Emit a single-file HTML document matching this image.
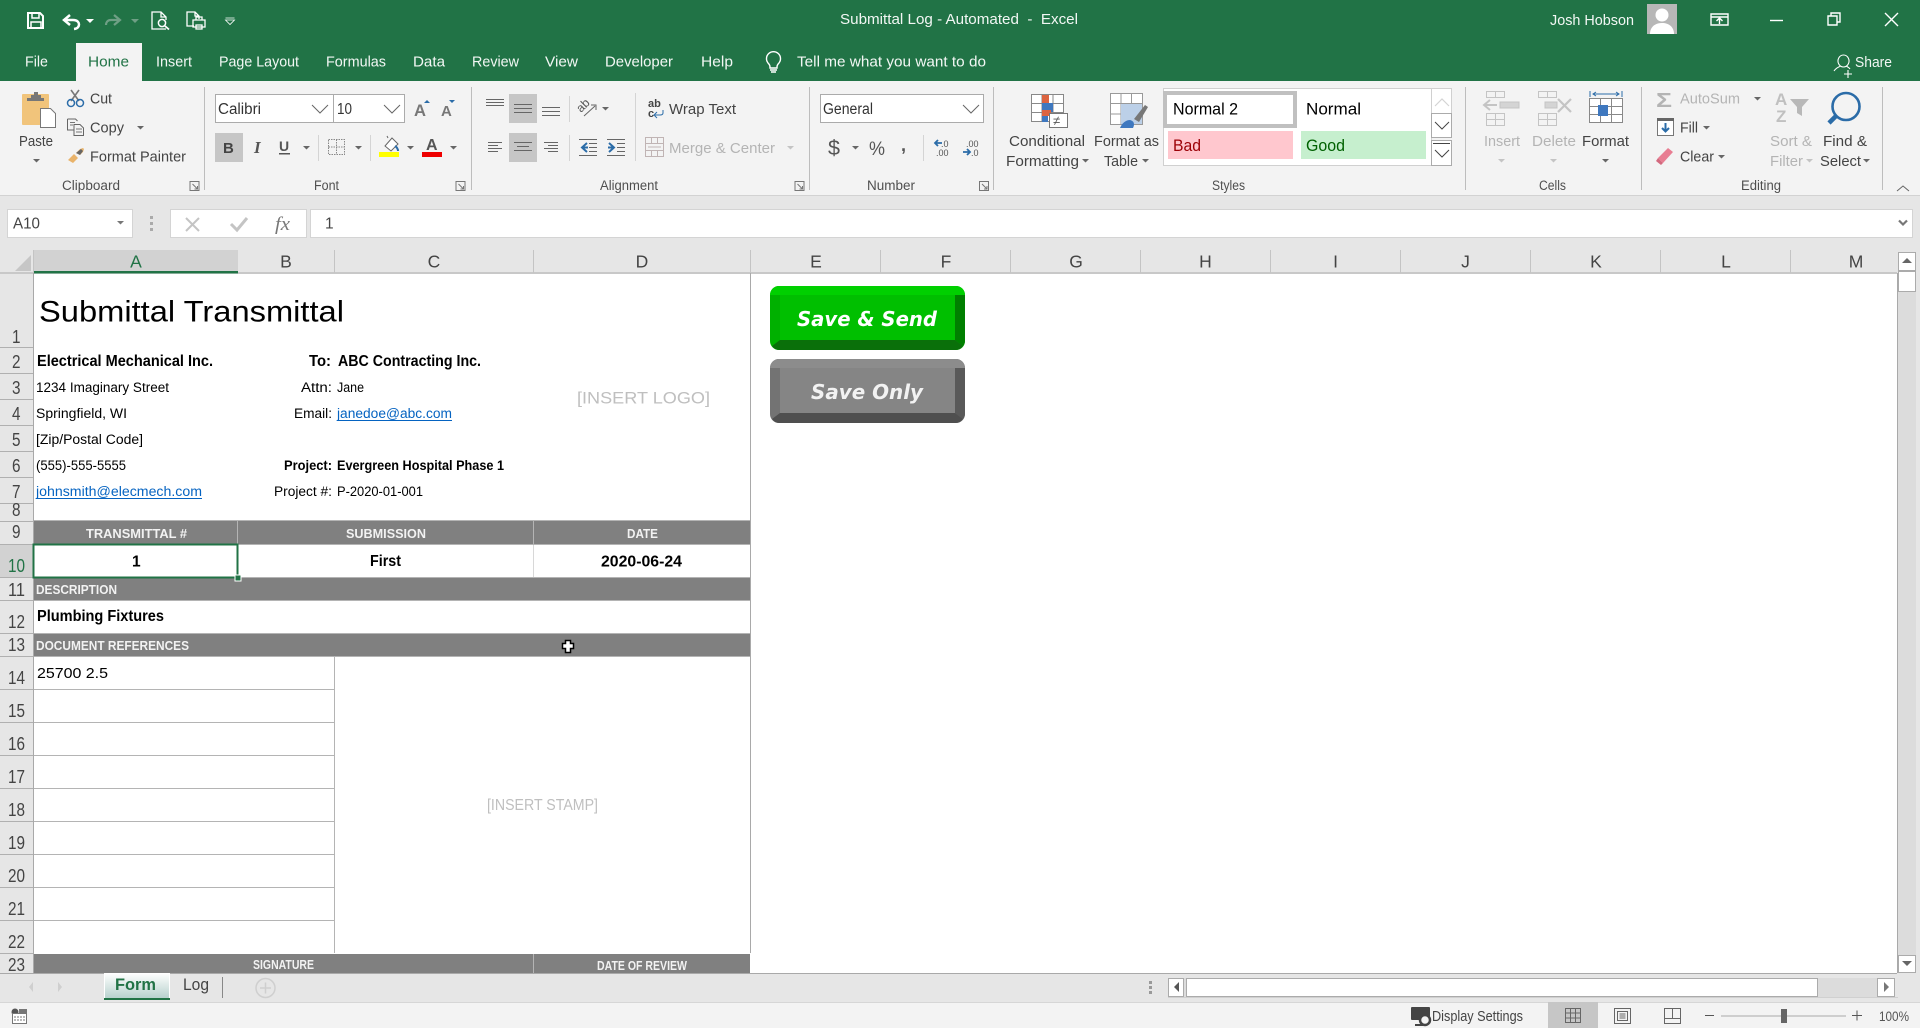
<!DOCTYPE html>
<html><head><meta charset="utf-8"><title>Submittal Log - Automated - Excel</title>
<style>
html,body{margin:0;padding:0;width:1920px;height:1028px;overflow:hidden;background:#e6e6e6}
svg{display:block;font-family:"Liberation Sans",sans-serif}
.tb{fill:#f2f7f4;font-size:14.5px}
.r{fill:#444;font-size:14.5px}
.g{fill:#b4b4b4;font-size:14.5px}
.l{fill:#4f4f4f;font-size:13.5px}
.h{fill:#444;font-size:17.5px;text-anchor:middle}
.n{fill:#444;font-size:18px}
.s{fill:#000;font-size:13.5px}
.b{fill:#000;font-size:15.5px;font-weight:bold}
.w{fill:#f2f2f2;font-size:13px;font-weight:bold}
.lnk{fill:#0563c1;font-size:13.5px}
.pl{fill:#bfbfbf;font-size:17px}
.btn{fill:#fff;font-family:"DejaVu Sans",sans-serif;font-size:20px;font-weight:bold;font-style:italic}
.a{fill:#666}
.ln{stroke:#666;stroke-width:1;fill:none}
.wh{stroke:#fff;fill:none}
</style></head><body>
<svg width="1920" height="1028" viewBox="0 0 1920 1028" xmlns="http://www.w3.org/2000/svg">
<!-- title bar -->
<rect width="1920" height="81" fill="#217346"/>
<g class="wh" stroke-width="2">
<path d="M28 13h12l3 3v12h-15z"/><path d="M32 13v5h7v-5" stroke-width="1.5"/><path d="M31 28v-6h10v6" stroke-width="1.5"/>
<path d="M70 15l-6 5 6 5" stroke-width="2.5"/><path d="M65 20h8c5 0 6 3 6 4.5s-1 4-5 4.5" stroke-width="2.5"/>
<path d="M114 15l6 5-6 5M119 20h-8c-4 0-5 3-5 5" stroke="#6f9f85" stroke-width="2.2"/>
<path d="M166 29h-14V12h9l5 5v3M161 12v5h5" stroke-width="1.3"/><circle cx="162" cy="23" r="3.6" stroke-width="1.5"/><path d="M165 26l4 3.500" stroke-width="1.8"/>
<path d="M194 26h-7V12h8l4 4v3M195 12v4h4" stroke-width="1.3"/><path d="M193 20h12v7h-12zM196 20v-3h6v3M196 25h6v4h-6z" stroke-width="1.3"/>
<path d="M225.500 20h9l-4.500 4.500zM225.500 18h9" stroke-width=".8"/>
</g>
<path d="M86 19h8l-4 4z" fill="#fff"/><path d="M131 19h8l-4 4z" fill="#6f9f85"/>
<text class="tb" x="840" y="24" textLength="238" lengthAdjust="spacingAndGlyphs" xml:space="preserve">Submittal Log - Automated  -  Excel</text>
<text class="tb" x="1550" y="25" textLength="84" lengthAdjust="spacingAndGlyphs">Josh Hobson</text>
<rect x="1647" y="4" width="30" height="30" fill="#b7b7b7"/>
<circle cx="1662" cy="15" r="6.500" fill="#fff"/><path d="M1650 34c0-7 5-11 12-11s12 4 12 11z" fill="#fff"/>
<g class="wh" stroke-width="1.4">
<path d="M1711 14h17v11h-17zM1711 17h17M1719.500 24v-5M1716.500 21l3-3 3 3"/>
<path d="M1770 20.500h13"/>
<path d="M1828 16h9v9h-9zM1831 16v-3h9v9h-3"/>
<path d="M1885 13l13 13M1898 13l-13 13"/>
<path d="M1834 71c2-3 4-4 7-5M1846 66c2 1 3 1.500 4 3M1843.500 55a5.500 6 0 1 0 .010 0zM1848 70v8M1844 74h8" stroke-width="1.1"/>
</g>
<rect x="76" y="43" width="66" height="38" fill="#f3f3f3"/>
<g class="tb">
<text x="25" y="66.500" textLength="23" lengthAdjust="spacingAndGlyphs">File</text>
<text x="156" y="66.500" textLength="36" lengthAdjust="spacingAndGlyphs">Insert</text>
<text x="219" y="66.500" textLength="80" lengthAdjust="spacingAndGlyphs">Page Layout</text>
<text x="326" y="66.500" textLength="60" lengthAdjust="spacingAndGlyphs">Formulas</text>
<text x="413" y="66.500" textLength="32" lengthAdjust="spacingAndGlyphs">Data</text>
<text x="472" y="66.500" textLength="47" lengthAdjust="spacingAndGlyphs">Review</text>
<text x="545" y="66.500" textLength="33" lengthAdjust="spacingAndGlyphs">View</text>
<text x="605" y="66.500" textLength="68" lengthAdjust="spacingAndGlyphs">Developer</text>
<text x="701" y="66.500" textLength="32" lengthAdjust="spacingAndGlyphs">Help</text>
<text x="797" y="66.500" textLength="189" lengthAdjust="spacingAndGlyphs">Tell me what you want to do</text>
<text x="1855" y="67" textLength="37" lengthAdjust="spacingAndGlyphs">Share</text>
</g>
<text x="88" y="66.500" font-size="14.500" fill="#217346" textLength="41" lengthAdjust="spacingAndGlyphs">Home</text>
<g class="wh" stroke-width="1.4"><path d="M768 63a7 7 0 1 1 11 0c-2 2-2 3-2 5h-7c0-2 0-3-2-5zM770 70h7M771 72h5"/></g>

<!-- ribbon -->
<rect y="81" width="1920" height="114" fill="#f3f3f3"/>
<rect y="195" width="1920" height="55" fill="#e6e6e6"/>
<rect y="195" width="1920" height="1" fill="#d2d2d2"/>
<g stroke="#bdbdbd" stroke-width="1">
<path d="M204.500 87v103M471.500 87v103M809.500 87v103M993.500 87v103M1465.500 87v103M1641.500 87v103M1882.500 87v103"/>
<path d="M318.500 135v26M370.500 135v26M569.500 96v26M569.500 135v26M635.500 93v68M923.500 135v26" stroke="#d4d4d4"/>
</g>
<!-- clipboard -->
<rect x="22" y="94" width="27" height="31" rx="1" fill="#f1c47b"/>
<path d="M27 98h4v-3h3v-3h4v3h3v3h3v3h-17z" fill="#777"/>
<path d="M40.500 108.500h10l5 5v14h-15z" fill="#fff" stroke="#777"/>
<text class="r" x="19" y="146" textLength="34" lengthAdjust="spacingAndGlyphs">Paste</text>
<path class="a" d="M33 159h7l-3.500 3.500z"/>
<text class="r" x="90" y="103.500" textLength="22" lengthAdjust="spacingAndGlyphs">Cut</text>
<g fill="none"><path d="M71 90l8 11M79 90l-8 11" stroke="#777" stroke-width="1.6"/><circle cx="71" cy="103" r="3.500" stroke="#2b6ca8" stroke-width="1.5"/><circle cx="80" cy="103" r="3.500" stroke="#2b6ca8" stroke-width="1.5"/></g>
<text class="r" x="90" y="132.500" textLength="34" lengthAdjust="spacingAndGlyphs">Copy</text>
<path d="M67.500 119h8l2 2M67.500 119v11h6M74 124.500h6l3.500 3.500v7.500h-9.500z" fill="none" stroke="#666"/><path d="M70 122.500h5M70 125h3M76 129h6M76 132h6" stroke="#777"/>
<path class="a" d="M137 126h7l-3.500 3.500z"/>
<text class="r" x="90" y="161.500" textLength="96" lengthAdjust="spacingAndGlyphs">Format Painter</text>
<path d="M74 154l4 4-5 5-5-3zM76 153l4-4 3-1 1 1-1 3-3 3z" fill="#e9b36a"/><path d="M76 153l5-4 2 2-3 4z" fill="#666"/>
<text class="l" x="62" y="190" textLength="58" lengthAdjust="spacingAndGlyphs">Clipboard</text>
<g class="launcher" fill="none" stroke="#777"><path d="M190 181.500h9v9h-9zM192.500 184l5 5M197.500 186v3h-3"/><path d="M456 181.500h9v9h-9zM458.500 184l5 5M463.500 186v3h-3"/><path d="M795 181.500h9v9h-9zM797.500 184l5 5M802.500 186v3h-3"/><path d="M979.500 181.500h9v9h-9zM982 184l5 5M987 186v3h-3"/></g>

<!-- font -->
<rect x="215.500" y="94.500" width="118" height="28" fill="#fff" stroke="#ababab"/>
<rect x="333.500" y="94.500" width="71" height="28" fill="#fff" stroke="#ababab"/>
<text x="218" y="114" font-size="15.500" fill="#333" textLength="43" lengthAdjust="spacingAndGlyphs">Calibri</text>
<text x="337" y="114" font-size="15.500" fill="#333" textLength="15" lengthAdjust="spacingAndGlyphs">10</text>
<path class="ln" stroke="#444" d="M312 105l8 8 8-8M384 105l8 8 8-8"/>
<text x="414" y="116" font-size="17" fill="#777" font-weight="bold" textLength="12" lengthAdjust="spacingAndGlyphs">A</text><path d="M424 103h6l-3-3z" fill="#2b6ca8"/>
<text x="441" y="116" font-size="15" fill="#777" font-weight="bold">A</text><path d="M449 100h6l-3 3z" fill="#2b6ca8"/>
<rect x="215" y="133" width="28" height="29" fill="#c6c6c6"/>
<text x="223" y="153" font-size="15" font-weight="bold" fill="#444">B</text>
<text x="254" y="153" font-size="17" font-style="italic" font-weight="bold" fill="#555" font-family="Liberation Serif">I</text>
<text x="279" y="151" font-size="14" font-weight="bold" fill="#555">U</text><rect x="279" y="153" width="11" height="1.500" fill="#555"/>
<path class="a" d="M303 146h7l-3.500 3.500zM355 146h7l-3.500 3.500zM407 146h7l-3.500 3.500zM450 146h7l-3.500 3.500z"/>
<path d="M328.500 139.500h16v15h-16zM336.500 139.500v15M328.500 147h16" fill="none" stroke="#888" stroke-dasharray="1.500 1"/>
<path d="M385 146l7-8 6 6-7 7zM388 138l-1-2" fill="#fff" stroke="#666"/><path d="M395 146q3 2 3 5" stroke="#2b6ca8" stroke-width="2" fill="none"/>
<rect x="379" y="152" width="20" height="5" fill="#ffff00"/>
<text x="426" y="150" font-size="16" font-weight="bold" fill="#555">A</text>
<rect x="422" y="152" width="20" height="5" fill="#ee0000"/>
<text class="l" x="314" y="190" textLength="25" lengthAdjust="spacingAndGlyphs">Font</text>

<!-- alignment -->
<rect x="509" y="94" width="28" height="29" fill="#c6c6c6"/><rect x="509" y="133" width="28" height="29" fill="#c6c6c6"/>
<g stroke="#666" stroke-width="1">
<path d="M486 99.500h18M486 102.500h18M486 105.500h18"/>
<path d="M514 104.500h18M514 108.500h18M514 112.500h18"/>
<path d="M542 107.500h18M542 111.500h18M542 115.500h18"/>
<path d="M488 142.500h14M488 145.500h10M488 148.500h14M488 151.500h10"/>
<path d="M514 142.500h18M517 146.500h12M514 150.500h18"/>
<path d="M544 142.500h14M548 145.500h10M544 148.500h14M548 151.500h10"/>
<path d="M579 139.500h18M589 143.500h8M589 147.500h8M589 151.500h8M579 155.500h18"/>
<path d="M607 139.500h18M617 143.500h8M617 147.500h8M617 151.500h8M607 155.500h18"/>
</g>
<path d="M588 147.500h-5M587 143l-5 4.500 5 4.500" stroke="#2b6ca8" stroke-width="2" fill="none"/>
<path d="M608 147.500h5M609 143l5 4.500-5 4.500" stroke="#2b6ca8" stroke-width="2" fill="none"/>
<text x="579" y="108" font-size="12" fill="#555" transform="rotate(-45 586 108)">ab</text>
<path d="M584 116l11-10M591 105l5 0 0 5" stroke="#666" fill="none"/>
<path class="a" d="M602 107h7l-3.500 3.500z"/>
<text x="648" y="107" font-size="11" fill="#444" font-weight="bold">ab</text><text x="648" y="117" font-size="11" fill="#444" font-weight="bold">c</text>
<path d="M663 110v3c0 2-2 2-3 2h-5M657 112l-3 3 3 3" stroke="#2b6ca8" fill="none"/>
<text class="r" x="669" y="114" textLength="67" lengthAdjust="spacingAndGlyphs">Wrap Text</text>
<path d="M645.500 137.500h18v19h-18zM645.500 143.500h18M645.500 150.500h18M651.500 137.500v6M657.500 137.500v6M651.500 150.500v6M657.500 150.500v6M648 147h13" fill="none" stroke="#c0b4b4"/>
<text class="g" x="669" y="153" textLength="106" lengthAdjust="spacingAndGlyphs">Merge &amp; Center</text>
<path d="M787 146h7l-3.500 3.500z" fill="#c4c4c4"/>
<text class="l" x="600" y="190" textLength="58" lengthAdjust="spacingAndGlyphs">Alignment</text>

<!-- number -->
<rect x="820.500" y="94.500" width="163" height="28" fill="#fff" stroke="#ababab"/>
<text x="823" y="114" font-size="15.500" fill="#333" textLength="50" lengthAdjust="spacingAndGlyphs">General</text>
<path class="ln" stroke="#444" d="M963 105l8 8 8-8"/>
<text x="828" y="155" font-size="21" fill="#555" textLength="12" lengthAdjust="spacingAndGlyphs">$</text>
<path class="a" d="M852 146h7l-3.500 3.500z"/>
<text x="869" y="155" font-size="19" fill="#555" textLength="16" lengthAdjust="spacingAndGlyphs">%</text>
<text x="901" y="151" font-size="18" font-weight="bold" fill="#555">,</text>
<text x="941" y="147" font-size="9" fill="#555">.0</text><text x="936" y="156" font-size="9" fill="#555">.00</text>
<path d="M935 143h7M938 140l-3 3 3 3" stroke="#2b6ca8" stroke-width="1.800" fill="none"/>
<text x="966" y="147" font-size="9" fill="#555">.00</text><text x="971" y="156" font-size="9" fill="#555">.0</text>
<path d="M963 152h7M967 149l3 3-3 3" stroke="#2b6ca8" stroke-width="1.800" fill="none"/>
<text class="l" x="867" y="190" textLength="48" lengthAdjust="spacingAndGlyphs">Number</text>

<!-- styles -->
<path d="M1031.500 94.500h32v27h-32zM1042 94.500v27M1053 94.500v27M1031.500 103.500h32M1031.500 112.500h32" fill="#fff" stroke="#888"/>
<rect x="1042" y="95" width="7" height="8" fill="#dc6440"/><rect x="1042" y="103" width="11" height="9" fill="#3f78bf"/><rect x="1042" y="110" width="9" height="6" fill="#dc6440"/><rect x="1042" y="116" width="6" height="6" fill="#3f78bf"/>
<rect x="1049.500" y="113.500" width="18" height="14" fill="#fff" stroke="#777"/><text x="1053" y="125" font-size="13" fill="#555">≠</text>
<path d="M1110.500 93.500h32v31h-32zM1121 93.500v31M1131.500 93.500v31M1110.500 103.500h32M1110.500 114h32" fill="#fff" stroke="#999"/>
<rect x="1121" y="104" width="21" height="20" fill="#bcd0e8"/>
<path d="M1134 119l11-14 3 2-9 15z" fill="#777"/><path d="M1120 128c2-5 6-8 10-8 4 1 5 4 3 8z" fill="#3f78bf"/>
<g class="r">
<text x="1009" y="146" textLength="76" lengthAdjust="spacingAndGlyphs">Conditional</text>
<text x="1006" y="166" textLength="73" lengthAdjust="spacingAndGlyphs">Formatting</text>
<text x="1094" y="146" textLength="65" lengthAdjust="spacingAndGlyphs">Format as</text>
<text x="1104" y="166" textLength="34" lengthAdjust="spacingAndGlyphs">Table</text>
</g>
<path class="a" d="M1082 159h7l-3.500 3.500zM1142 159h7l-3.500 3.500z"/>
<rect x="1163.500" y="88.500" width="268" height="77" fill="#fff" stroke="#d0d0d0"/>
<rect x="1165" y="93" width="130" height="33" fill="#fff" stroke="#c0c0c0" stroke-width="4"/>
<rect x="1168" y="131" width="125" height="28" fill="#ffc7ce"/><rect x="1301" y="131" width="125" height="28" fill="#c6efce"/>
<text x="1173" y="114.500" font-size="17" fill="#000" textLength="65" lengthAdjust="spacingAndGlyphs">Normal 2</text>
<text x="1306" y="114.500" font-size="17" fill="#000" textLength="55" lengthAdjust="spacingAndGlyphs">Normal</text>
<text x="1173" y="151" font-size="17" fill="#9c0006" textLength="28" lengthAdjust="spacingAndGlyphs">Bad</text>
<text x="1306" y="151" font-size="17" fill="#006100" textLength="39" lengthAdjust="spacingAndGlyphs">Good</text>
<g fill="#fff" stroke="#ababab"><rect x="1431.500" y="88.500" width="20" height="25" stroke="#d0d0d0"/><rect x="1431.500" y="113.500" width="20" height="24"/><rect x="1431.500" y="140.500" width="20" height="25"/></g>
<path d="M1435 106l7-7 7 7" fill="none" stroke="#d4d4d4" stroke-width="1.200"/>
<path d="M1435 122l7 7 7-7M1435 150l7 7 7-7M1433 143.500h17" fill="none" stroke="#444"/>
<text class="l" x="1212" y="190" textLength="33" lengthAdjust="spacingAndGlyphs">Styles</text>

<!-- cells -->
<path d="M1486.500 91.500h18v6h-18zM1495.500 91.500v6M1486.500 113.500h18v12h-18zM1495.500 113.500v12M1486.500 119.500h18" fill="none" stroke="#c4c4c4"/>
<rect x="1500" y="102" width="19" height="6" fill="#d4d4d4" stroke="#c4c4c4"/><path d="M1497 105h-12M1490 100l-6 5 6 5" stroke="#c4c4c4" stroke-width="2" fill="none"/>
<path d="M1538.500 91.500h18v6h-18zM1547.500 91.500v6M1538.500 113.500h18v12h-18zM1547.500 113.500v12M1538.500 119.500h18" fill="none" stroke="#c4c4c4"/>
<rect x="1545" y="102" width="12" height="6" fill="#d4d4d4" stroke="#c4c4c4"/><path d="M1558 99l13 13M1571 99l-13 13" stroke="#c4c4c4" stroke-width="2.200"/>
<path d="M1589.500 98.500h33v24h-33zM1600.500 98.500v24M1611.500 98.500v24M1589.500 106.500h33M1589.500 114.500h33" fill="#fff" stroke="#888"/>
<rect x="1598" y="105" width="10" height="11" fill="#3f78bf"/>
<path d="M1590 91v6M1622 91v6M1593 94h26M1596 92l-3 2 3 2M1616 92l3 2-3 2" stroke="#2b6ca8" fill="none"/>
<text class="g" x="1484" y="146" textLength="36" lengthAdjust="spacingAndGlyphs">Insert</text>
<text class="g" x="1532" y="146" textLength="44" lengthAdjust="spacingAndGlyphs">Delete</text>
<text class="r" x="1582" y="146" textLength="47" lengthAdjust="spacingAndGlyphs" fill="#333">Format</text>
<path d="M1498 159h7l-3.500 3.500zM1550 159h7l-3.500 3.500z" fill="#c4c4c4"/><path class="a" d="M1602 159h7l-3.500 3.500z"/>
<text class="l" x="1539" y="190" textLength="27" lengthAdjust="spacingAndGlyphs">Cells</text>

<!-- editing -->
<text x="1656" y="107" font-size="20" font-weight="bold" fill="#b4b4b4" textLength="16" lengthAdjust="spacingAndGlyphs">Σ</text>
<text class="g" x="1680" y="103.500" textLength="60" lengthAdjust="spacingAndGlyphs">AutoSum</text>
<path class="a" d="M1754 97h7l-3.500 3.500zM1703 126h7l-3.500 3.500zM1718 155h7l-3.500 3.500z"/>
<rect x="1657.500" y="118.500" width="16" height="17" fill="#fff" stroke="#777"/><rect x="1657" y="118" width="17" height="3" fill="#666"/>
<path d="M1665.500 123v8M1662 128l3.500 3.500 3.500-3.500" stroke="#2b6ca8" stroke-width="2" fill="none"/>
<text class="r" x="1680" y="132.500" textLength="18" lengthAdjust="spacingAndGlyphs">Fill</text>
<path d="M1658 158l10-10 5 4-10 11z" fill="#e87d92"/><path d="M1658 158l5 5-2 2-5-4z" fill="#d3697e"/>
<text class="r" x="1680" y="161.500" textLength="34" lengthAdjust="spacingAndGlyphs">Clear</text>
<text x="1775" y="105" font-size="17" font-weight="bold" fill="#c0c0c0">A</text><text x="1776" y="122" font-size="17" font-weight="bold" fill="#c0c0c0">Z</text>
<path d="M1790 99h19l-7 8v9l-5-3v-6z" fill="#b8b8b8"/>
<text class="g" x="1770" y="146" textLength="42" lengthAdjust="spacingAndGlyphs">Sort &amp;</text>
<text class="g" x="1770" y="166" textLength="33" lengthAdjust="spacingAndGlyphs">Filter</text>
<path d="M1806 159h7l-3.500 3.500z" fill="#c4c4c4"/>
<circle cx="1846" cy="106.500" r="13.500" fill="none" stroke="#2b6ca8" stroke-width="2.600"/><path d="M1836 116l-7 7" stroke="#2b6ca8" stroke-width="4.500"/>
<text class="r" x="1823" y="146" textLength="44" lengthAdjust="spacingAndGlyphs" fill="#333">Find &amp;</text>
<text class="r" x="1820" y="166" textLength="41" lengthAdjust="spacingAndGlyphs" fill="#333">Select</text>
<path class="a" d="M1863 159h7l-3.500 3.500z"/>
<text class="l" x="1741" y="190" textLength="40" lengthAdjust="spacingAndGlyphs">Editing</text>
<path d="M1897 191l6-5 6 5" fill="none" stroke="#666"/>

<!-- formula bar -->
<rect x="7.500" y="209.500" width="125" height="28" fill="#fff" stroke="#d4d4d4"/>
<text x="13" y="228.500" font-size="15.500" fill="#444" textLength="27" lengthAdjust="spacingAndGlyphs">A10</text>
<path d="M117 221h7l-3.500 3.500z" fill="#777"/>
<path d="M151.500 216v3M151.500 222v3M151.500 228v3" stroke="#aaa" stroke-width="3"/>
<rect x="170.500" y="209.500" width="136" height="28" fill="#fff" stroke="#d4d4d4"/>
<rect x="310.500" y="209.500" width="1602" height="28" fill="#fff" stroke="#d4d4d4"/>
<path d="M186 218l13 13M199 218l-13 13" stroke="#c4c4c4" stroke-width="2"/>
<path d="M231 224l6 6 10-12" fill="none" stroke="#c4c4c4" stroke-width="3"/>
<text x="275" y="230" font-size="19" font-style="italic" font-family="Liberation Serif" fill="#777" textLength="15" lengthAdjust="spacingAndGlyphs">fx</text>
<text x="325" y="228.500" font-size="15.500" fill="#444">1</text>
<path d="M1899 220.500l4 4 4-4" fill="none" stroke="#777" stroke-width="2.200"/>

<!-- column headers -->
<path d="M31 255v16h-16z" fill="#c6c6c6"/>
<rect x="34" y="250" width="204" height="23" fill="#d2d2d2"/>
<rect y="272.500" width="1897" height="1" fill="#a9a9a9"/>
<rect x="34" y="271" width="204" height="2.500" fill="#217346"/>
<path d="M33.500 250v23M334.500 250v23M533.500 250v23M750.500 250v23M880.500 250v23M1010.500 250v23M1140.500 250v23M1270.500 250v23M1400.500 250v23M1530.500 250v23M1660.500 250v23M1790.500 250v23" stroke="#c4c4c4"/>
<text class="h" x="136" y="267.500" style="fill:#217346">A</text>
<text class="h" x="286" y="267.500">B</text><text class="h" x="434" y="267.500">C</text><text class="h" x="642" y="267.500">D</text><text class="h" x="816" y="267.500">E</text><text class="h" x="946" y="267.500">F</text><text class="h" x="1076" y="267.500">G</text><text class="h" x="1205.500" y="267.500">H</text><text class="h" x="1335.500" y="267.500">I</text><text class="h" x="1465.500" y="267.500">J</text><text class="h" x="1596" y="267.500">K</text><text class="h" x="1726" y="267.500">L</text><text class="h" x="1856" y="267.500">M</text>

<!-- sheet -->
<rect x="34" y="274" width="1863" height="699" fill="#fff"/>
<rect x="0" y="544" width="33" height="34" fill="#d2d2d2"/>
<rect x="33" y="273" width="1" height="700" fill="#a9a9a9"/>
<rect x="750" y="273" width="1" height="680" fill="#a9a9a9"/>
<path d="M0 347.500h33M0 373.500h33M0 399.500h33M0 425.500h33M0 451.500h33M0 477.500h33M0 503.500h33M0 521.500h33M0 544.500h33M0 577.500h33M0 600.500h33M0 633.500h33M0 656.500h33M0 689.500h33M0 722.500h33M0 755.500h33M0 788.500h33M0 821.500h33M0 854.500h33M0 887.500h33M0 920.500h33M0 953.500h33" stroke="#b0b0b0"/>
<g class="n">
<text x="12" y="343" textLength="8.500" lengthAdjust="spacingAndGlyphs">1</text><text x="12" y="368" textLength="8.500" lengthAdjust="spacingAndGlyphs">2</text><text x="12" y="394" textLength="8.500" lengthAdjust="spacingAndGlyphs">3</text><text x="12" y="420" textLength="8.500" lengthAdjust="spacingAndGlyphs">4</text><text x="12" y="446" textLength="8.500" lengthAdjust="spacingAndGlyphs">5</text><text x="12" y="472" textLength="8.500" lengthAdjust="spacingAndGlyphs">6</text><text x="12" y="498" textLength="8.500" lengthAdjust="spacingAndGlyphs">7</text><text x="12" y="516" textLength="8.500" lengthAdjust="spacingAndGlyphs">8</text><text x="12" y="538" textLength="8.500" lengthAdjust="spacingAndGlyphs">9</text>
<text x="8" y="572" textLength="17" lengthAdjust="spacingAndGlyphs" style="fill:#217346">10</text>
<text x="8" y="596" textLength="17" lengthAdjust="spacingAndGlyphs">11</text><text x="8" y="628" textLength="17" lengthAdjust="spacingAndGlyphs">12</text><text x="8" y="651" textLength="17" lengthAdjust="spacingAndGlyphs">13</text><text x="8" y="684" textLength="17" lengthAdjust="spacingAndGlyphs">14</text><text x="8" y="717" textLength="17" lengthAdjust="spacingAndGlyphs">15</text><text x="8" y="750" textLength="17" lengthAdjust="spacingAndGlyphs">16</text><text x="8" y="783" textLength="17" lengthAdjust="spacingAndGlyphs">17</text><text x="8" y="816" textLength="17" lengthAdjust="spacingAndGlyphs">18</text><text x="8" y="849" textLength="17" lengthAdjust="spacingAndGlyphs">19</text><text x="8" y="882" textLength="17" lengthAdjust="spacingAndGlyphs">20</text><text x="8" y="915" textLength="17" lengthAdjust="spacingAndGlyphs">21</text><text x="8" y="948" textLength="17" lengthAdjust="spacingAndGlyphs">22</text><text x="8" y="971" textLength="17" lengthAdjust="spacingAndGlyphs">23</text>
</g>
<text x="39" y="321.500" font-size="29.500" fill="#000" textLength="305" lengthAdjust="spacingAndGlyphs">Submittal Transmittal</text>
<text class="b" x="37" y="366" textLength="176" lengthAdjust="spacingAndGlyphs">Electrical Mechanical Inc.</text>
<text class="b" x="309" y="366" textLength="22" lengthAdjust="spacingAndGlyphs">To:</text>
<text class="b" x="338" y="366" textLength="143" lengthAdjust="spacingAndGlyphs">ABC Contracting Inc.</text>
<text class="s" x="36" y="392" textLength="133" lengthAdjust="spacingAndGlyphs">1234 Imaginary Street</text>
<text class="s" x="301" y="392" textLength="31" lengthAdjust="spacingAndGlyphs">Attn:</text>
<text class="s" x="337" y="392" textLength="27" lengthAdjust="spacingAndGlyphs">Jane</text>
<text class="s" x="36" y="418" textLength="91" lengthAdjust="spacingAndGlyphs">Springfield, WI</text>
<text class="s" x="294" y="418" textLength="38" lengthAdjust="spacingAndGlyphs">Email:</text>
<text class="lnk" x="337" y="418" textLength="115" lengthAdjust="spacingAndGlyphs">janedoe@abc.com</text><rect x="337" y="420" width="115" height="1" fill="#0563c1"/>
<text class="s" x="36" y="444" textLength="107" lengthAdjust="spacingAndGlyphs">[Zip/Postal Code]</text>
<text class="s" x="36" y="470" textLength="90" lengthAdjust="spacingAndGlyphs">(555)-555-5555</text>
<text class="s" x="284" y="470" textLength="48" lengthAdjust="spacingAndGlyphs" font-weight="bold">Project:</text>
<text class="s" x="337" y="470" textLength="167" lengthAdjust="spacingAndGlyphs" font-weight="bold">Evergreen Hospital Phase 1</text>
<text class="lnk" x="36" y="496" textLength="166" lengthAdjust="spacingAndGlyphs">johnsmith@elecmech.com</text><rect x="36" y="498" width="166" height="1" fill="#0563c1"/>
<text class="s" x="274" y="496" textLength="58" lengthAdjust="spacingAndGlyphs">Project #:</text>
<text class="s" x="337" y="496" textLength="86" lengthAdjust="spacingAndGlyphs">P-2020-01-001</text>
<text class="pl" x="577" y="403.500" textLength="133" lengthAdjust="spacingAndGlyphs">[INSERT LOGO]</text>

<!-- bands -->
<g fill="#808080"><rect x="34" y="521" width="716" height="23"/><rect x="34" y="578" width="716" height="22"/><rect x="34" y="634" width="716" height="22"/><rect x="34" y="954" width="716" height="19"/></g>
<path d="M34 520.500h716M34 544.500h716M34 600.500h716M34 633.500h716M34 656.500h716M34 577.500h716" stroke="#b4b4b4"/>
<path d="M237.500 521v23M533.500 521v23M533.500 954v19" stroke="#b4b4b4"/><path d="M533.500 545v32" stroke="#d8d8d8"/>
<g class="w">
<text x="86" y="538" textLength="101" lengthAdjust="spacingAndGlyphs">TRANSMITTAL #</text>
<text x="346" y="538" textLength="80" lengthAdjust="spacingAndGlyphs">SUBMISSION</text>
<text x="627" y="538" textLength="31" lengthAdjust="spacingAndGlyphs">DATE</text>
<text x="36" y="594" textLength="81" lengthAdjust="spacingAndGlyphs">DESCRIPTION</text>
<text x="36" y="650" textLength="153" lengthAdjust="spacingAndGlyphs">DOCUMENT REFERENCES</text>
<text x="253" y="969" textLength="61" lengthAdjust="spacingAndGlyphs">SIGNATURE</text>
<text x="597" y="970" textLength="90" lengthAdjust="spacingAndGlyphs">DATE OF REVIEW</text>
</g>
<text class="b" x="132" y="566.500">1</text>
<text class="b" x="370" y="566" textLength="31" lengthAdjust="spacingAndGlyphs">First</text>
<text class="b" x="601" y="566.500" textLength="81" lengthAdjust="spacingAndGlyphs">2020-06-24</text>
<rect x="33.500" y="544.500" width="204" height="33" fill="none" stroke="#217346" stroke-width="2"/>
<rect x="235" y="575" width="6" height="6" fill="#217346" stroke="#fff"/>
<text class="b" x="37" y="621" textLength="127" lengthAdjust="spacingAndGlyphs">Plumbing Fixtures</text>
<text x="37" y="678" font-size="15" fill="#000" textLength="71" lengthAdjust="spacingAndGlyphs">25700 2.5</text>
<path d="M34 689.500h300M34 722.500h300M34 755.500h300M34 788.500h300M34 821.500h300M34 854.500h300M34 887.500h300M34 920.500h300M334.500 657v296" stroke="#b4b4b4"/>
<text class="pl" x="487" y="810" textLength="111" lengthAdjust="spacingAndGlyphs" style="font-size:15.500px">[INSERT STAMP]</text>
<path d="M565.500 640.500h5v3h3v5h-3v4h-5v-4h-3v-5h3z" fill="#fff" stroke="#000" stroke-width="1.500"/>

<!-- buttons -->
<rect x="770" y="286" width="195" height="64" rx="9" fill="#00b000"/>
<path d="M770 295a9 9 0 0 1 9-9h177a9 9 0 0 1 9 9l-10 0h-175z" fill="#00d000"/>
<path d="M955 295h10v46a9 9 0 0 1-2 5l-8-6z" fill="#007f00"/>
<path d="M780 340h175l8 6a9 9 0 0 1-7 4h-177a9 9 0 0 1-7-4z" fill="#0a700a"/>
<rect x="780" y="295" width="175" height="45" fill="#00bf00"/>
<text class="btn" x="797" y="326" textLength="140" lengthAdjust="spacingAndGlyphs">Save &amp; Send</text>
<rect x="770" y="359" width="195" height="64" rx="9" fill="#737373"/>
<path d="M770 368a9 9 0 0 1 9-9h177a9 9 0 0 1 9 9l-10 0h-175z" fill="#8c8c8c"/>
<path d="M955 368h10v46a9 9 0 0 1-2 5l-8-6z" fill="#595959"/>
<path d="M780 413h175l8 6a9 9 0 0 1-7 4h-177a9 9 0 0 1-7-4z" fill="#4f4f4f"/>
<rect x="780" y="368" width="175" height="45" fill="#858585"/>
<text class="btn" x="811" y="399" textLength="112" lengthAdjust="spacingAndGlyphs" style="fill:#f2f2f2">Save Only</text>

<!-- vertical scrollbar -->
<rect x="1897" y="250" width="23" height="723" fill="#e6e6e6"/>
<rect x="1898" y="292" width="18" height="663" fill="#dcdcdc"/>
<rect x="1898.500" y="252.500" width="17" height="18" fill="#fff" stroke="#ababab"/>
<rect x="1898.500" y="271.500" width="17" height="20" fill="#fff" stroke="#ababab"/>
<path d="M1902 263h10l-5-5z" fill="#666"/>
<rect x="1898.500" y="955.500" width="17" height="17" fill="#fff" stroke="#ababab"/>
<path d="M1902 961h10l-5 5z" fill="#666"/>
<rect x="1897" y="273" width="1" height="700" fill="#a9a9a9"/>

<!-- sheet tabs -->
<rect y="973" width="1920" height="29" fill="#e6e6e6"/>
<rect y="973" width="1897" height="1" fill="#a9a9a9"/>
<path d="M33 982l-4 5 4 5zM58 982l4 5-4 5z" fill="#cfcfcf"/>
<defs><linearGradient id="tg" x1="0" y1="0" x2="0" y2="1"><stop offset="0" stop-color="#fff"/><stop offset="1" stop-color="#b8d2ce"/></linearGradient></defs>
<rect x="104" y="973" width="66" height="25" fill="url(#tg)"/>
<path d="M104.500 974v24M169.500 974v24" stroke="#fff"/>
<rect x="104" y="998" width="66" height="2" fill="#217346"/>
<text x="115" y="990" font-size="17" font-weight="bold" fill="#217346" textLength="41" lengthAdjust="spacingAndGlyphs">Form</text>
<text x="183" y="990" font-size="17" fill="#444" textLength="26" lengthAdjust="spacingAndGlyphs">Log</text>
<rect x="222" y="977" width="1" height="21" fill="#888"/>
<circle cx="265.500" cy="988" r="9.500" fill="none" stroke="#cfcfcf" stroke-width="1.500"/><path d="M260 988h11M265.500 982.500v11" stroke="#cfcfcf" stroke-width="1.500"/>
<path d="M1150.500 981v3M1150.500 986v3M1150.500 991v3" stroke="#999" stroke-width="3"/>
<rect x="1168" y="978" width="709" height="19" fill="#dcdcdc"/>
<rect x="1168.500" y="978.500" width="15" height="18" fill="#fff" stroke="#ababab"/>
<path d="M1179 982v10l-5-5z" fill="#555"/>
<rect x="1186.500" y="978.500" width="631" height="18" fill="#fff" stroke="#ababab"/>
<rect x="1877.500" y="978.500" width="17" height="18" fill="#fff" stroke="#ababab"/>
<path d="M1884 982v10l5-5z" fill="#777"/>
<rect x="1168" y="997" width="730" height="1" fill="#d0d0d0"/>

<!-- status bar -->
<rect y="1002" width="1920" height="26" fill="#f3f3f3"/>
<rect y="1002" width="1920" height="1" fill="#d6d6d6"/>
<circle cx="15" cy="1012" r="3.500" fill="#555"/><rect x="19" y="1009" width="8" height="5" fill="#777"/>
<rect x="12.500" y="1013.500" width="14" height="10" fill="#fff" stroke="#777"/><path d="M14 1017h11M14 1020h11" stroke="#777" stroke-dasharray="2 1"/>
<rect x="1411" y="1007" width="19" height="13" rx="1" fill="#444"/><path d="M1415 1025h8" stroke="#444" stroke-width="2"/>
<circle cx="1425" cy="1020" r="5" fill="#f3f3f3" stroke="#444" stroke-width="2.500"/>
<text x="1432" y="1021" font-size="14.500" fill="#444" textLength="91" lengthAdjust="spacingAndGlyphs">Display Settings</text>
<rect x="1548" y="1002" width="50" height="26" fill="#c6c6c6"/>
<path d="M1565.500 1008.500h15v14h-15zM1570.500 1008.500v14M1575.500 1008.500v14M1565.500 1013h15M1565.500 1018h15" fill="none" stroke="#666"/>
<path d="M1614.500 1008.500h16v15h-16zM1617.500 1011.500h10v9h-10zM1619.500 1014h6M1619.500 1016h6M1619.500 1018h6" fill="none" stroke="#666"/>
<path d="M1664.500 1008.500h16v15h-16zM1664.500 1018.500h16M1672.500 1008.500v10" fill="none" stroke="#666"/>
<path d="M1705 1015.500h9M1852 1015.500h10M1857 1010.500v10" stroke="#555"/>
<path d="M1721 1016h125" stroke="#aaa"/>
<rect x="1781" y="1009" width="6" height="14" fill="#666"/>
<text x="1879" y="1021" font-size="13.500" fill="#555" textLength="30" lengthAdjust="spacingAndGlyphs">100%</text>
</svg>
</body></html>
